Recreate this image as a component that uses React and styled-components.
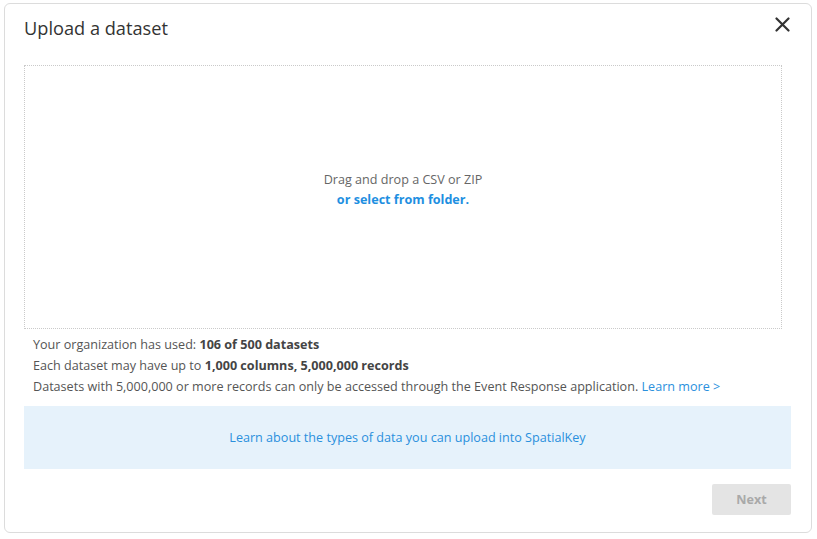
import React from "react";
import styled, { createGlobalStyle } from "styled-components";

const GlobalStyle = createGlobalStyle`
  html, body {
    margin: 0;
    padding: 0;
    background: #ffffff;
    font-family: "Open Sans", "Noto Sans", sans-serif;
  }
`;

const Page = styled.div`
  padding: 3px 0 0 4px;
  width: 817px;
  height: 539px;
  box-sizing: border-box;
`;

const Dialog = styled.div`
  width: 808px;
  height: 530px;
  box-sizing: border-box;
  border: 1px solid #dcdcdc;
  border-radius: 6px;
  padding: 0 20px 17px 19px;
  display: flex;
  flex-direction: column;
  background: #fff;
`;

const Header = styled.div`
  display: flex;
  justify-content: space-between;
  align-items: center;
  height: 61px;
`;

const Title = styled.h2`
  margin: 0;
  font-size: 18.2px;
  font-weight: 400;
  color: #333;
  margin-top: -14px;
`;

const Close = styled.button`
  border: none;
  background: none;
  padding: 0;
  margin: -20px 0 0 0;
  width: 18px;
  height: 18px;
  display: flex;
  align-items: center;
  justify-content: center;
  cursor: pointer;
`;

const DropZone = styled.div`
  margin-right: 9px;
  height: 264px;
  box-sizing: border-box;
  border: 1px dotted #cacaca;
  display: flex;
  flex-direction: column;
  align-items: center;
  justify-content: center;
  padding-bottom: 15px;
  font-size: 12.6px;
  line-height: 20px;
`;

const DropText = styled.span`
  color: #666;
`;

const FolderLink = styled.a`
  color: #1e8fe1;
  font-weight: 700;
  cursor: pointer;
`;

const Info = styled.div`
  margin-top: 5px;
  padding-left: 9px;
  font-size: 12.6px;
  line-height: 21px;
  color: #555;

  b {
    color: #444;
    font-weight: 700;
  }
`;

const InlineLink = styled.a`
  color: #2a90dd;
  cursor: pointer;
`;

const Notice = styled.div`
  margin-top: 9px;
  height: 63px;
  background: #e6f2fb;
  display: flex;
  align-items: center;
  justify-content: center;
  font-size: 12.6px;
  color: #2a90dd;
`;

const Footer = styled.div`
  margin-top: 15px;
  display: flex;
  justify-content: flex-end;
`;

const NextButton = styled.button`
  width: 79px;
  height: 31px;
  border: none;
  border-radius: 2px;
  background: #e4e4e4;
  color: #a9a9a9;
  font-family: inherit;
  font-size: 12.6px;
  font-weight: 700;
`;

export default function App() {
  return (
    <Page>
      <GlobalStyle />
      <Dialog>
        <Header>
          <Title>Upload a dataset</Title>
          <Close aria-label="Close">
            <svg width="15" height="15" viewBox="0 0 15 15">
              <path
                d="M1.5 1.5 L13.5 13.5 M13.5 1.5 L1.5 13.5"
                stroke="#333"
                strokeWidth="2.2"
                strokeLinecap="round"
              />
            </svg>
          </Close>
        </Header>
        <DropZone>
          <DropText>Drag and drop a CSV or ZIP</DropText>
          <FolderLink>or select from folder.</FolderLink>
        </DropZone>
        <Info>
          <div>
            Your organization has used: <b>106 of 500 datasets</b>
          </div>
          <div>
            Each dataset may have up to <b>1,000 columns, 5,000,000 records</b>
          </div>
          <div>
            Datasets with 5,000,000 or more records can only be accessed through
            the Event Response application. <InlineLink>Learn more &gt;</InlineLink>
          </div>
        </Info>
        <Notice>Learn about the types of data you can upload into SpatialKey</Notice>
        <Footer>
          <NextButton disabled>Next</NextButton>
        </Footer>
      </Dialog>
    </Page>
  );
}
